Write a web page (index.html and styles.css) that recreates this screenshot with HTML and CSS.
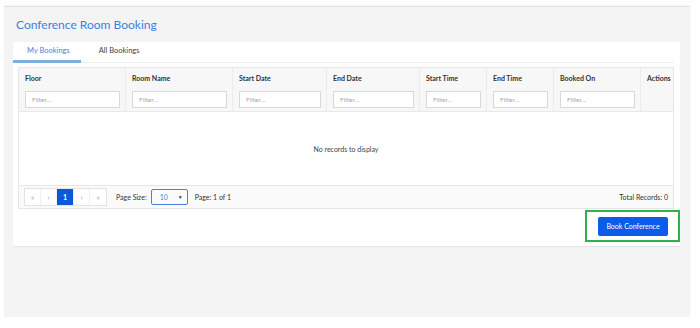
FILE: index.html
```html
<!DOCTYPE html>
<html>
<head>
  <title>Conference Room Booking</title>
  <link rel="stylesheet" href="styles.css">
</head>
<body>

  <div class="page">
    <h1 class="page-title">Conference Room Booking</h1>

    <div class="card">
      <div class="tabs">
        <div class="tab active">My Bookings</div>
        <div class="tab">All Bookings</div>
      </div>

      <div class="grid">
        <div class="grid-header">
          <div class="col"><span class="col-title">Floor</span><input class="filter" placeholder="Filter..."></div>
          <div class="col"><span class="col-title">Room Name</span><input class="filter" placeholder="Filter..."></div>
          <div class="col"><span class="col-title">Start Date</span><input class="filter" placeholder="Filter..."></div>
          <div class="col"><span class="col-title">End Date</span><input class="filter" placeholder="Filter..."></div>
          <div class="col"><span class="col-title">Start Time</span><input class="filter" placeholder="Filter..."></div>
          <div class="col"><span class="col-title">End Time</span><input class="filter" placeholder="Filter..."></div>
          <div class="col"><span class="col-title">Booked On</span><input class="filter" placeholder="Filter..."></div>
          <div class="col col-actions"><span class="col-title">Actions</span></div>
        </div>

        <div class="grid-body">No records to display</div>

        <div class="pager">
          <div class="pager-buttons">
            <span class="pg">&laquo;</span>
            <span class="pg">&lsaquo;</span>
            <span class="pg selected">1</span>
            <span class="pg">&rsaquo;</span>
            <span class="pg">&raquo;</span>
          </div>
          <span class="pager-label">Page Size:</span>
          <div class="page-size"><span>10</span><span class="caret">&#9660;</span></div>
          <span class="pager-label">Page: 1 of 1</span>
          <span class="total">Total Records: 0</span>
        </div>
      </div>

      <div class="actions-row">
        <div class="highlight">
          <button type="button" class="book-button">Book Conference</button>
        </div>
      </div>
    </div>
  </div>

</body>
</html>
```

FILE: styles.css
```css
body {
    margin: 0;
    padding: 0;
    background-color: #ffffff;
    font-family: 'Lato', 'Open Sans', sans-serif;
    color: #333333;
}

.page {
    margin: 6px 0 0 4px;
    width: 686px;
    height: 311px;
    box-sizing: border-box;
    background-color: #f4f4f4;
    border-top: 1px solid #e4e4e4;
    box-shadow: 0 -1px 2px rgba(0, 0, 0, 0.05);
    padding: 10px 10px 0 9px;
}

.page-title {
    margin: 0 0 9px 3px;
    font-size: 12px;
    font-weight: 400;
    line-height: 16px;
    color: #3b7fe3;
}

.card {
    width: 667px;
    box-sizing: border-box;
    background-color: #ffffff;
    padding: 0 6px 4px 5px;
    box-shadow: 0 1px 1px rgba(0, 0, 0, 0.06);
}

.tabs {
    display: flex;
    height: 20px;
    margin-left: -5px;
    border-bottom: 1px solid #f0f0f0;
    margin-bottom: 4px;
}

.tab {
    font-size: 7.5px;
    line-height: 18px;
    color: #444444;
    padding: 0 12px 0 14px;
    white-space: nowrap;
}

.tab.active {
    color: #4a7fd6;
    border-bottom: 3px solid #7fb0dc;
    height: 18px;
    padding-right: 11px;
    margin-right: 4px;
}

.grid {
    border: 1px solid #e6e6e6;
}

.grid-header {
    display: grid;
    grid-template-columns: 107px 107px 94px 93px 67px 67px 87px 1fr;
    background-color: #f7f7f7;
    border-bottom: 1px solid #e9e9e9;
}

.col {
    display: flex;
    flex-direction: column;
    padding: 5px 5px 3px 6px;
    border-right: 1px solid #ececec;
}

.col:last-child {
    border-right: none;
}

.col-title {
    font-size: 7px;
    font-weight: 700;
    color: #333333;
    height: 10px;
    line-height: 10px;
    margin-bottom: 8px;
}

.col-actions {
    align-items: flex-end;
    padding-right: 3px;
}

.filter {
    width: 100%;
    height: 17px;
    box-sizing: border-box;
    border: 1px solid #d9d9d9;
    background-color: #ffffff;
    padding: 0 6px;
    font-family: 'Lato', 'Open Sans', sans-serif;
    font-size: 6.5px;
    color: #333333;
}

.filter::placeholder {
    color: #aaaaaa;
}

.grid-body {
    height: 73px;
    display: flex;
    align-items: center;
    justify-content: center;
    font-size: 7px;
    color: #444444;
    border-bottom: 1px solid #e6e6e6;
}

.pager {
    display: flex;
    align-items: center;
    height: 22px;
    padding: 0 5px;
    background-color: #fafafa;
    font-size: 7px;
}

.pager-buttons {
    display: flex;
    border: 1px solid #e3e3e3;
    background-color: #ffffff;
    height: 16px;
}

.pg {
    width: 16px;
    box-sizing: border-box;
    display: flex;
    align-items: center;
    justify-content: center;
    color: #7a9cc9;
    font-size: 7px;
    border-right: 1px solid #f0f0f0;
}

.pg:last-child {
    border-right: none;
}

.pg.selected {
    background-color: #0b58d9;
    color: #ffffff;
    width: 17px;
    font-weight: 700;
}

.pager-label {
    margin-left: 9px;
    color: #333333;
}

.page-size {
    margin-left: 4px;
    width: 37px;
    height: 16px;
    box-sizing: border-box;
    border: 1px solid #4b82e0;
    border-radius: 2px;
    display: flex;
    align-items: center;
    justify-content: space-between;
    padding: 0 4px 0 8px;
    color: #4b82e0;
}

.caret {
    font-size: 5px;
    color: #1f3f80;
}

.page-size + .pager-label {
    margin-left: 7px;
}

.total {
    margin-left: auto;
    color: #333333;
}

.actions-row {
    display: flex;
    justify-content: flex-end;
    margin: 1px -6px 0 0;
}

.highlight {
    width: 95px;
    height: 32px;
    box-sizing: border-box;
    border: 2px solid #2eb34a;
    display: flex;
    align-items: center;
    justify-content: flex-start;
    padding-left: 11px;
}

.book-button {
    width: 70px;
    height: 19px;
    background-color: #0b5ce8;
    color: #ffffff;
    border: none;
    border-radius: 2px;
    font-family: 'Lato', 'Open Sans', sans-serif;
    font-size: 7px;
    padding: 0;
}
```
